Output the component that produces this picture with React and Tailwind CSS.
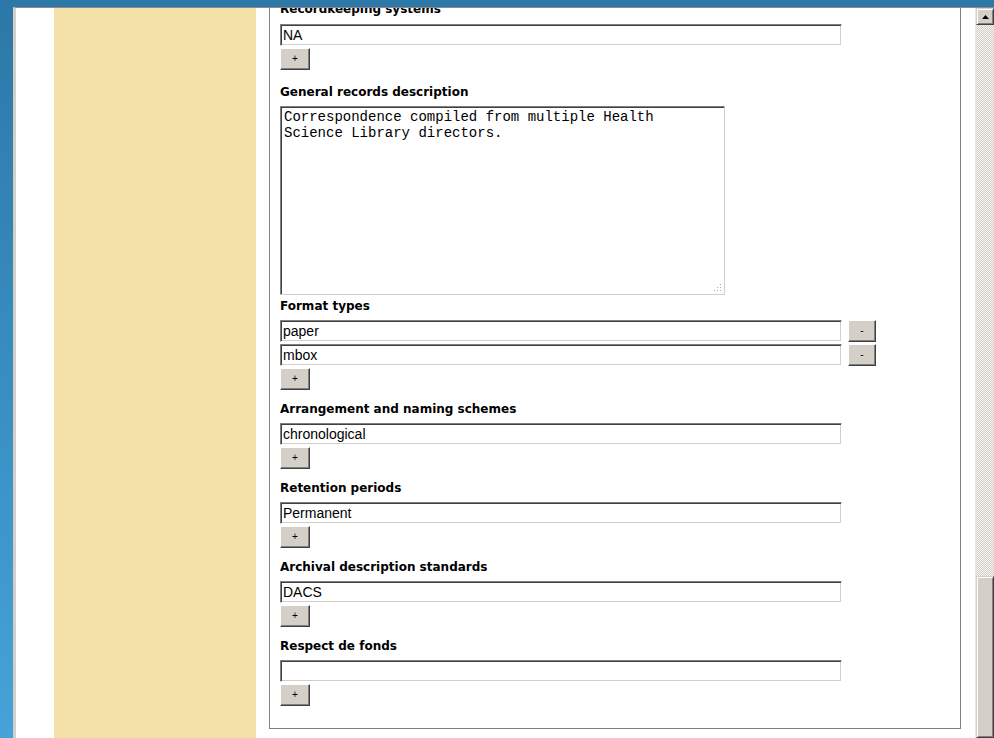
const inputCls =
  "block h-[22px] w-[562px] border border-t-[#808080] border-l-[#808080] border-b-white border-r-white bg-white px-[2px] text-[14px] leading-[18px] text-black shadow-[inset_1px_1px_0_#404040,inset_-1px_-1px_0_#d4d0c8] outline-none font-['Liberation_Sans',Arial,sans-serif]";

const btnCls =
  "flex h-[22px] items-center justify-center border border-t-white border-l-white border-b-[#404040] border-r-[#404040] bg-[#d4d0c8] text-[10px] leading-none text-black shadow-[inset_-1px_-1px_0_#808080] font-['Liberation_Sans',Arial,sans-serif]";

function Label({ children, className = "mt-[11px] mb-[6px]" }) {
  return (
    <div
      className={`${className} h-[16px] whitespace-nowrap text-[12px] font-bold leading-[16px] text-black font-['DejaVu_Sans',Verdana,sans-serif]`}
    >
      {children}
    </div>
  );
}

function AddButton() {
  return (
    <button type="button" className={`${btnCls} mt-[2px] w-[30px]`}>
      +
    </button>
  );
}

function Field({ label, values, labelClass }) {
  return (
    <div>
      <Label className={labelClass}>{label}</Label>
      {values.map((v, i) => (
        <div key={i} className={`flex items-center gap-[6px] ${i > 0 ? "mt-[2px]" : ""}`}>
          <input className={inputCls} defaultValue={v} readOnly />
          {values.length > 1 && (
            <button type="button" className={`${btnCls} w-[28px]`}>
              -
            </button>
          )}
        </div>
      ))}
      <AddButton />
    </div>
  );
}

function Scrollbar() {
  return (
    <div className="flex w-[19px] flex-col border-l border-[#e8e6e0] bg-[repeating-conic-gradient(#d4d0c8_0_25%,#f4f3ef_0_50%)] bg-[length:2px_2px]">
      <div className="flex h-[17px] w-[18px] items-center justify-center border border-t-[#d4d0c8] border-l-[#d4d0c8] border-b-[#404040] border-r-[#404040] bg-[#d4d0c8] shadow-[inset_1px_1px_0_#fff,inset_-1px_-1px_0_#808080]">
        <svg width="7" height="4" viewBox="0 0 7 4">
          <path d="M3.5 0L7 4H0z" fill="#000" />
        </svg>
      </div>
      <div className="flex-1" />
      <div className="h-[162px] w-[18px] border border-t-[#d4d0c8] border-l-[#d4d0c8] border-b-[#404040] border-r-[#404040] bg-[#d4d0c8] shadow-[inset_1px_1px_0_#fff,inset_-1px_-1px_0_#808080]" />
    </div>
  );
}

export default function App() {
  return (
    <div className="h-[738px] w-[994px] overflow-hidden bg-gradient-to-b from-[#2c78a8] to-[#45a3d9]">
      <div className="ml-[13px] mt-[7px] flex h-[731px] border-l-[3px] border-t border-l-[#d4d0c8] border-t-[#8a8a8a] bg-white">
        <div className="w-[38px]" />
        <div className="w-[202px] bg-[#f3e1a9]" />
        <div className="w-[13px]" />

        {/* form panel, scrolled to the bottom */}
        <div className="h-[721px] w-[692px] overflow-hidden border-b border-l border-r border-[#808080] pl-[10px]">
          <Field label="Recordkeeping systems" values={["NA"]} labelClass="-mt-[7px] mb-[7px]" />

          <Label className="mt-[14px] mb-[6px]">General records description</Label>
          <div className="relative w-[445px]">
            <textarea
              readOnly
              className="block h-[189px] w-[445px] resize-none border border-t-[#808080] border-l-[#808080] border-b-[#d4d0c8] border-r-[#d4d0c8] bg-white px-[3px] pt-[2px] text-[14px] leading-[16px] text-black shadow-[inset_1px_1px_0_#404040] outline-none font-['Liberation_Mono','Courier_New',monospace]"
              defaultValue={"Correspondence compiled from multiple Health\nScience Library directors."}
            />
            <svg className="absolute bottom-[3px] right-[3px]" width="9" height="9" viewBox="0 0 9 9">
              <g fill="#a9a9a9">
                <rect x="7" y="1" width="1" height="1" />
                <rect x="4" y="4" width="1" height="1" />
                <rect x="7" y="4" width="1" height="1" />
                <rect x="1" y="7" width="1" height="1" />
                <rect x="4" y="7" width="1" height="1" />
                <rect x="7" y="7" width="1" height="1" />
              </g>
            </svg>
          </div>

          <Field label="Format types" values={["paper", "mbox"]} labelClass="mt-[3px] mb-[6px]" />
          <Field label="Arrangement and naming schemes" values={["chronological"]} />
          <Field label="Retention periods" values={["Permanent"]} />
          <Field label="Archival description standards" values={["DACS"]} />
          <Field label="Respect de fonds" values={[""]} />
        </div>

        <div className="w-[14px]" />
        <Scrollbar />
      </div>
    </div>
  );
}
